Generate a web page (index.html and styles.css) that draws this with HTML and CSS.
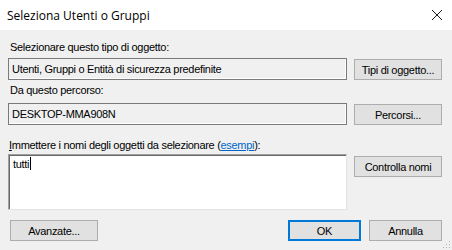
FILE: index.html
```html
<!DOCTYPE html>
<html lang="it">
<head>
    <meta charset="UTF-8">
    <title>Seleziona Utenti o Gruppi</title>
    <link rel="stylesheet" href="styles.css">
</head>
<body>
    <div class="dialog">
        <!-- barra del titolo -->
        <div class="titlebar">
            <span class="title">Seleziona Utenti o Gruppi</span>
            <svg class="close" width="12" height="12" viewBox="0 0 12 12">
                <path d="M1 1 L11 11 M11 1 L1 11" stroke="#1a1a1a" stroke-width="1" fill="none"/>
            </svg>
        </div>

        <div class="content">
            <div class="label first">Selezionare questo tipo di oggetto:</div>
            <div class="row">
                <div class="field readonly">Utenti, Gruppi o Entità di sicurezza predefinite</div>
                <button class="btn">Tipi di oggetto...</button>
            </div>

            <div class="label second">Da questo percorso:</div>
            <div class="row">
                <div class="field readonly">DESKTOP-MMA908N</div>
                <button class="btn">Percorsi...</button>
            </div>

            <div class="label third"><u>I</u>mmettere i nomi degli oggetti da selezionare (<a href="#">esempi</a>):</div>
            <div class="row top">
                <div class="field names">tutti<span class="caret"></span></div>
                <button class="btn">Controlla nomi</button>
            </div>

            <div class="footer">
                <button class="btn">Avanzate...</button>
                <div class="actions">
                    <button class="btn small default">OK</button>
                    <button class="btn small">Annulla</button>
                </div>
            </div>
        </div>
        <div class="grip"></div>
    </div>
</body>
</html>
```

FILE: styles.css
```css
body {
    margin: 0;
    width: 452px;
    height: 250px;
    overflow: hidden;
    background: #f0f0f0;
    font-family: 'Liberation Sans', Arial, sans-serif;
    font-size: 11px;
    letter-spacing: -0.3px;
    color: #000;
}
.dialog {
    position: relative;
    height: 250px;
}
.titlebar {
    height: 30px;
    background: #fff;
    display: flex;
    align-items: center;
    justify-content: space-between;
    padding: 0 8px 0 7px;
}
.title {
    font-family: 'Open Sans', 'Noto Sans', sans-serif;
    font-size: 12px;
    letter-spacing: 0;
    color: #000;
}
.close {
    margin-top: -1px;
    margin-right: 1px;
}
.content {
    padding: 11px 10px 0 8px;
}
.label {
    line-height: 13px;
    padding-left: 2px;
}
.label.first { margin-bottom: 4px; }
.label.second { margin: 4px 0 6px; }
.label.third { margin: 14px 0 2px; padding-left: 1px; }
.label a {
    color: #0066cc;
}
.row {
    display: grid;
    grid-template-columns: 1fr 88px;
    column-gap: 7px;
}
.field {
    height: 22px;
    box-sizing: border-box;
    border: 1px solid #7a7a7a;
    padding: 3px 3px 0;
    line-height: 14px;
}
.field.readonly {
    background: #f0f0f0;
    box-shadow: inset -1px -1px 0 #fff;
}
.field.names {
    height: 56px;
    background: #fff;
    border-color: #a0a0a0 #e3e3e3 #e3e3e3 #a0a0a0;
    box-shadow: inset 1px 1px 0 #696969;
    padding: 2px 4px 0;
}
.caret {
    display: inline-block;
    width: 1px;
    height: 13px;
    background: #000;
    vertical-align: -2px;
    margin-left: 1px;
}
.btn {
    height: 21px;
    margin-top: 1px;
    box-sizing: border-box;
    border: 1px solid #adadad;
    background: #e1e1e1;
    font-family: 'Liberation Sans', Arial, sans-serif;
    font-size: 11px;
    letter-spacing: -0.3px;
    color: #000;
    padding: 0;
}
.row.top .btn {
    margin-top: 2px;
}
.footer {
    display: flex;
    justify-content: space-between;
    margin-top: 10px;
    padding-left: 2px;
}
.footer .btn {
    width: 88px;
    margin-top: 0;
}
.actions {
    display: flex;
    gap: 8px;
}
.footer .btn.small {
    width: 73px;
}
.btn.default {
    border: 2px solid #0078d7;
}
.grip {
    position: absolute;
    right: 2px;
    bottom: 2px;
    width: 8px;
    height: 8px;
    background:
        radial-gradient(circle, #b4b4b4 0.8px, transparent 1px) 0 0 / 3px 3px;
    clip-path: polygon(100% 0, 100% 100%, 0 100%);
}
```
